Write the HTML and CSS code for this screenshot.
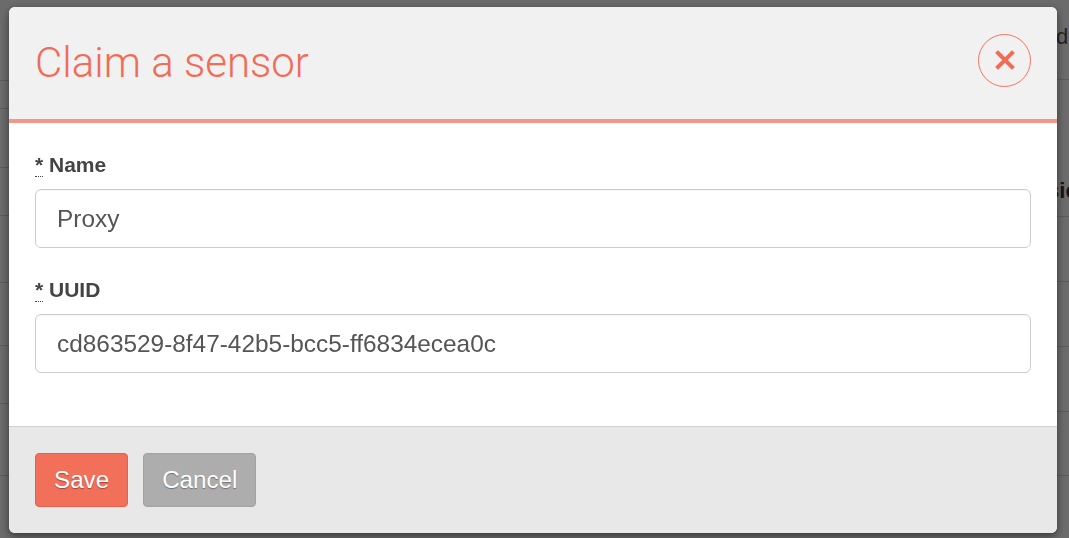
FILE: index.html
```html
<!DOCTYPE html>
<html>
<head>
<meta charset="utf-8">
<link rel="stylesheet" href="styles.css">
</head>
<body>
<div class="page">
  <div class="col col-left">
    <div class="row r-l1"></div>
    <div class="row r-l2"></div>
    <div class="row r-l3"></div>
    <div class="row r-l4"></div>
    <div class="row r-l5"></div>
    <div class="row r-l6"></div>
    <div class="row r-l7"></div>
    <div class="row r-l8"></div>
  </div>
  <div class="col col-mid"></div>
  <div class="col col-right">
    <div class="row r-r1"><span class="bg-text">Add</span></div>
    <div class="row r-r2"><span class="bg-text bold">Basic</span></div>
    <div class="row r-r3"></div>
    <div class="row r-r4"></div>
    <div class="row r-r5"></div>
    <div class="row r-r6"></div>
  </div>
</div>

<div class="overlay">
  <div class="modal">
    <div class="modal-header">
      <h1 class="modal-title">Claim a sensor</h1>
      <button class="close-btn" type="button" aria-label="Close">
        <svg width="20" height="20" viewBox="0 0 20 20"><path d="M3 3 L17 17 M17 3 L3 17" stroke="#f26c55" stroke-width="4" stroke-linecap="square" fill="none"/></svg>
      </button>
    </div>
    <div class="modal-body">
      <div class="form-group">
        <label class="form-label"><abbr class="req" title="required">*</abbr> Name</label>
        <input class="form-input" type="text" value="Proxy">
      </div>
      <div class="form-group">
        <label class="form-label"><abbr class="req" title="required">*</abbr> UUID</label>
        <input class="form-input" type="text" value="cd863529-8f47-42b5-bcc5-ff6834ecea0c">
      </div>
    </div>
    <div class="modal-footer">
      <button class="btn btn-save" type="button">Save</button>
      <button class="btn btn-cancel" type="button">Cancel</button>
    </div>
  </div>
</div>
</body>
</html>
```

FILE: styles.css
```css
* { box-sizing: border-box; }
html, body {
  margin: 0;
  padding: 0;
  width: 1069px;
  height: 538px;
  overflow: hidden;
  background: #fff;
  font-family: "Liberation Sans", Arial, sans-serif;
}

/* background page */
.page {
  display: flex;
  width: 1069px;
  height: 538px;
}
.col-left { width: 9px; }
.col-mid { flex: 1; }
.col-right { width: 12px; overflow: hidden; }
.row {
  border-bottom: 1px solid #dcdcdc;
}
.r-l1 { height: 81px; }
.r-l2 { height: 28px; }
.r-l3 { height: 59px; }
.r-l4 { height: 48px; }
.r-l5 { height: 67px; }
.r-l6 { height: 63px; }
.r-l7 { height: 58px; }
.r-l8 { height: 72px; }

.r-r1 { height: 80px; padding-top: 22px; }
.r-r2 { height: 137px; padding-top: 96px; }
.r-r3 { height: 65px; }
.r-r4 { height: 65px; }
.r-r5 { height: 65px; }
.r-r6 { height: 64px; }
.bg-text {
  display: block;
  white-space: nowrap;
  font-size: 22px;
  line-height: 30px;
  color: #555;
  margin-left: -28px;
}
.bg-text.bold {
  font-weight: bold;
  color: #333;
  margin-left: -38px;
}

/* overlay */
.overlay {
  position: fixed;
  inset: 0;
  background: rgba(0, 0, 0, 0.58);
  padding: 7px 0 0 9px;
}
.modal {
  width: 1048px;
  height: 526px;
  background: #fff;
  border-radius: 6px;
  overflow: hidden;
  box-shadow: 0 3px 9px rgba(0, 0, 0, 0.5);
  display: flex;
  flex-direction: column;
}
.modal-header {
  height: 116px;
  background: #f1f1f1;
  border-bottom: 4px solid #f4968a;
  display: flex;
  align-items: center;
  justify-content: space-between;
  padding: 0 26px 0 26px;
}
.modal-title {
  margin: 0;
  font-family: Roboto, "Liberation Sans", sans-serif;
  font-weight: 300;
  font-size: 42px;
  color: #f26c55;
  line-height: 1.2;
}
.close-btn {
  width: 53px;
  height: 53px;
  border-radius: 50%;
  border: 1px solid #f2745f;
  background: transparent;
  padding: 0;
  margin-bottom: 6px;
  display: flex;
  align-items: center;
  justify-content: center;
}
.modal-body {
  padding: 30px 26px 53px;
  background: #fff;
}
.form-group {
  margin-bottom: 30px;
}
.form-group:last-child { margin-bottom: 0; }
.form-label {
  display: block;
  font-size: 21px;
  line-height: 24px;
  font-weight: bold;
  color: #444;
  margin-bottom: 12px;
}
.req {
  text-decoration: none;
  border-bottom: 1px dotted #444;
  cursor: help;
}
.form-input {
  display: block;
  width: 100%;
  height: 59px;
  border: 1px solid #ccc;
  border-radius: 6px;
  padding: 0 21px;
  font-family: "Liberation Sans", Arial, sans-serif;
  font-size: 24.4px;
  color: #555;
  background: #fff;
  box-shadow: inset 0 1px 1px rgba(0,0,0,0.04);
  outline: none;
}
.modal-footer {
  flex: 1;
  background: #e8e8e8;
  border-top: 1px solid #cfcfcf;
  padding: 26px;
  display: flex;
  align-items: flex-start;
  gap: 15px;
}
.btn {
  height: 54px;
  padding: 0 18px;
  border-radius: 4px;
  font-family: "Liberation Sans", Arial, sans-serif;
  font-size: 24.2px;
  color: #fff;
  text-shadow: 0 1px 1px rgba(0, 0, 0, 0.35);
  cursor: pointer;
}
.btn-save {
  background: #f26f5a;
  border: 1px solid #e8604b;
}
.btn-cancel {
  background: #adadad;
  border: 1px solid #a2a2a2;
}
```
